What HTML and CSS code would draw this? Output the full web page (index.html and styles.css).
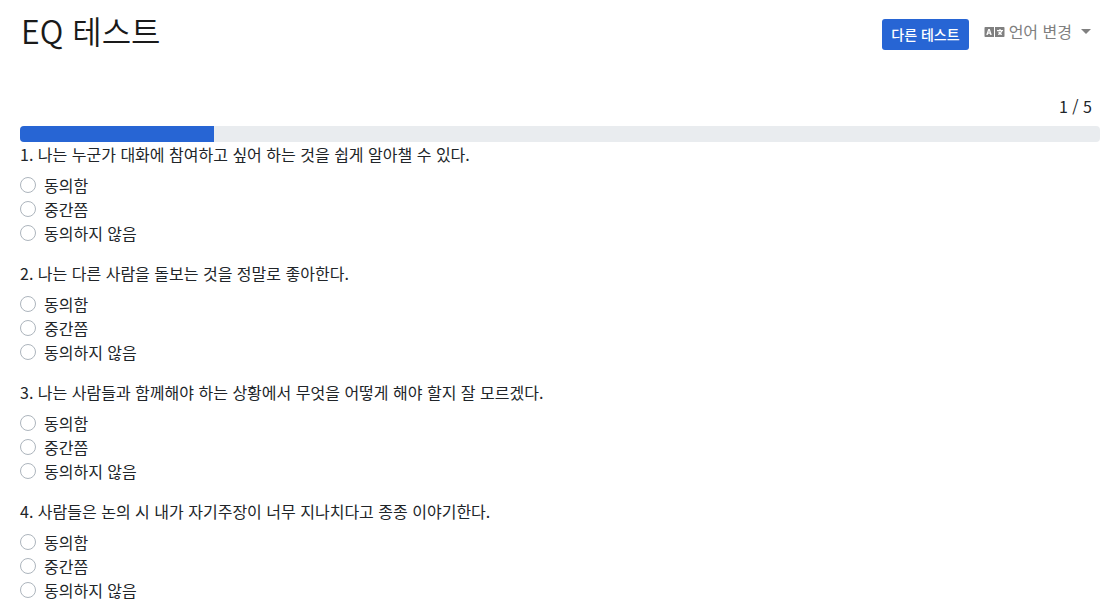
FILE: index.html
```html
<!DOCTYPE html>
<html lang="ko">
<head>
<meta charset="utf-8">
<title>EQ 테스트</title>
<link rel="stylesheet" href="styles.css">
</head>
<body>
<header class="header">
  <h1 class="title">EQ 테스트</h1>
  <nav class="nav">
    <a class="btn" href="#">다른 테스트</a>
    <button class="language" type="button">
      <svg class="language-icon" viewBox="0 0 640 512" aria-hidden="true"><path fill="currentColor" d="M152.1 236.2c-3.5-12.1-7.8-33.2-7.8-33.2h-.5s-4.3 21.1-7.8 33.2l-11.1 37.5H163zM616 96H336v320h280c13.3 0 24-10.7 24-24V120c0-13.3-10.7-24-24-24zm-24 120c0 6.6-5.4 12-12 12h-11.4c-6.9 23.6-21.7 47.4-42.7 69.9 8.4 6.4 17.1 12.5 26.1 18 5.5 3.4 7.3 10.5 4.1 16.2l-7.9 13.9c-3.4 5.9-10.9 7.8-16.7 4.3-12.6-7.8-24.5-16.1-35.4-24.9-10.9 8.7-22.7 17.1-35.4 24.9-5.8 3.5-13.3 1.6-16.7-4.3l-7.9-13.9c-3.2-5.6-1.4-12.8 4.2-16.2 9.3-5.7 18-11.7 26.1-18-7.9-8.4-14.9-17-21-25.7-4-5.7-2.2-13.6 3.7-17.1l6.5-3.9 7.3-4.3c5.4-3.2 12.4-1.7 16 3.4 5 7 10.8 14 17.4 20.9 13.5-14.2 23.8-28.9 30-43.2H412c-6.6 0-12-5.4-12-12v-16c0-6.6 5.4-12 12-12h64v-16c0-6.6 5.4-12 12-12h16c6.6 0 12 5.4 12 12v16h64c6.6 0 12 5.4 12 12zM0 120v272c0 13.3 10.7 24 24 24h280V96H24c-13.3 0-24 10.7-24 24zm58.9 216.1L116.4 167c1.7-4.9 6.2-8.1 11.4-8.1h32.5c5.1 0 9.7 3.3 11.4 8.1l57.5 169.1c2.6 7.8-3.1 15.9-11.4 15.9h-22.9a12 12 0 0 1-11.5-8.6l-9.4-31.9h-60.2l-9.1 31.8c-1.5 5.1-6.2 8.7-11.5 8.7H70.300c-8.2 0-14-8.1-11.4-15.9z"/></svg>
      언어 변경
      <span class="caret"></span>
    </button>
  </nav>
</header>
<main class="quiz">
  <p class="step">1 / 5</p>
  <div class="progress" role="progressbar" aria-label="진행률" aria-valuenow="18" aria-valuemin="0" aria-valuemax="100"><div class="progress-bar" style="width: 18%"></div></div>
  <form>
    <fieldset class="question">
      <legend class="prompt">1. 나는 누군가 대화에 참여하고 싶어 하는 것을 쉽게 알아챌 수 있다.</legend>
      <label class="option"><input class="radio" type="radio" name="q1">동의함</label>
      <label class="option"><input class="radio" type="radio" name="q1">중간쯤</label>
      <label class="option"><input class="radio" type="radio" name="q1">동의하지 않음</label>
    </fieldset>
    <fieldset class="question">
      <legend class="prompt">2. 나는 다른 사람을 돌보는 것을 정말로 좋아한다.</legend>
      <label class="option"><input class="radio" type="radio" name="q2">동의함</label>
      <label class="option"><input class="radio" type="radio" name="q2">중간쯤</label>
      <label class="option"><input class="radio" type="radio" name="q2">동의하지 않음</label>
    </fieldset>
    <fieldset class="question">
      <legend class="prompt">3. 나는 사람들과 함께해야 하는 상황에서 무엇을 어떻게 해야 할지 잘 모르겠다.</legend>
      <label class="option"><input class="radio" type="radio" name="q3">동의함</label>
      <label class="option"><input class="radio" type="radio" name="q3">중간쯤</label>
      <label class="option"><input class="radio" type="radio" name="q3">동의하지 않음</label>
    </fieldset>
    <fieldset class="question">
      <legend class="prompt">4. 사람들은 논의 시 내가 자기주장이 너무 지나치다고 종종 이야기한다.</legend>
      <label class="option"><input class="radio" type="radio" name="q4">동의함</label>
      <label class="option"><input class="radio" type="radio" name="q4">중간쯤</label>
      <label class="option"><input class="radio" type="radio" name="q4">동의하지 않음</label>
    </fieldset>
  </form>
</main>
</body>
</html>
```
FILE: styles.css
```css
* { box-sizing: border-box; }
body {
  margin: 0;
  background: #fff;
  color: #212529;
  font: 400 16px/24px "Noto Sans CJK KR", sans-serif;
}
.header {
  display: flex;
  justify-content: space-between;
  padding: 10px 18px 0 21px;
}
.title {
  margin: 0;
  color: #1a1a1a;
  font-family: "Noto Sans CJK KR DemiLight", "Noto Sans CJK KR", sans-serif;
  font-size: 32px;
  line-height: 40px;
  font-weight: 350;
}
.nav {
  display: flex;
  align-items: flex-start;
  gap: 15px;
  padding-top: 9px;
}
.btn {
  padding: 5px 9px;
  border-radius: 3px;
  background: #2765d4;
  color: #fff;
  font-size: 14px;
  font-weight: 500;
  line-height: 21px;
  text-decoration: none;
}
.language {
  display: flex;
  align-items: center;
  gap: 4px;
  padding: 0;
  border: 0;
  background: none;
  color: #808080;
  font: inherit;
}
.language-icon {
  width: 21px;
  height: 16px;
  margin-top: 2px;
}
.caret {
  margin-left: 5px;
  border: 5px solid transparent;
  border-top-color: currentColor;
  border-bottom: 0;
}
.quiz { padding: 44px 9px 0 20px; }
.step {
  margin: 0 8px 8px;
  text-align: right;
}
.progress {
  height: 16px;
  overflow: hidden;
  border-radius: 4px;
  background: #e9ecef;
}
.progress-bar {
  height: 100%;
  background: #2765d4;
}
.question {
  margin: 0 0 16px;
  padding: 0;
  border: 0;
}
.prompt {
  margin-bottom: 7px;
  padding: 0;
}
.option {
  display: flex;
  align-items: center;
  gap: 8px;
}
.radio {
  appearance: none;
  width: 16px;
  height: 16px;
  margin: 0;
  border: 1px solid #adb5bd;
  border-radius: 50%;
  background: #fff;
}
.radio:checked {
  border: 5px solid #2765d4;
}
```
